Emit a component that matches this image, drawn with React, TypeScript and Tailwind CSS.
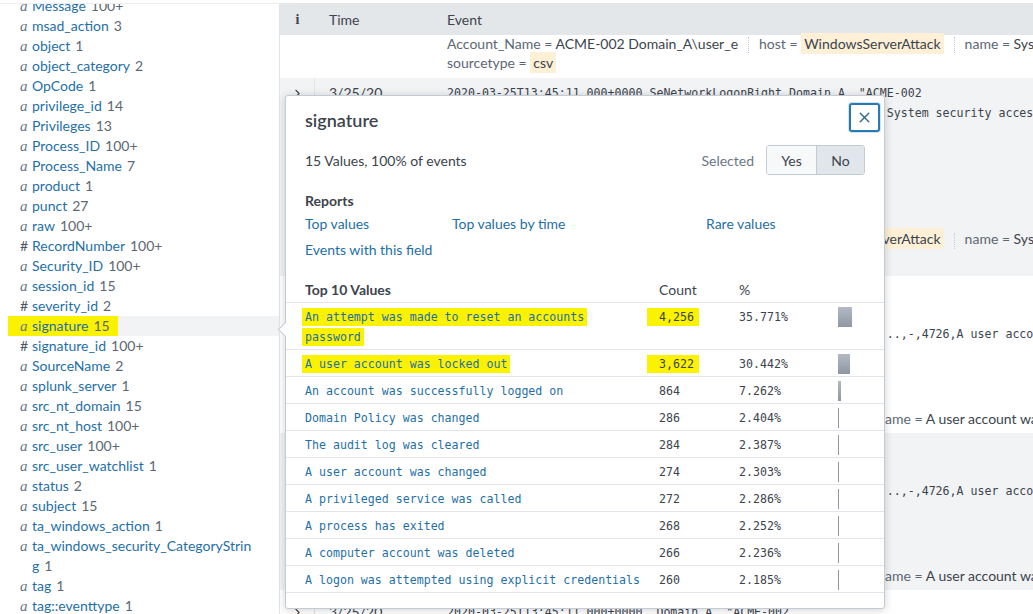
import { X, ChevronRight } from 'lucide-react';

const fields: [string, string, string][] = [
  ['a', 'Message', '100+'],
  ['a', 'msad_action', '3'],
  ['a', 'object', '1'],
  ['a', 'object_category', '2'],
  ['a', 'OpCode', '1'],
  ['a', 'privilege_id', '14'],
  ['a', 'Privileges', '13'],
  ['a', 'Process_ID', '100+'],
  ['a', 'Process_Name', '7'],
  ['a', 'product', '1'],
  ['a', 'punct', '27'],
  ['a', 'raw', '100+'],
  ['#', 'RecordNumber', '100+'],
  ['a', 'Security_ID', '100+'],
  ['a', 'session_id', '15'],
  ['#', 'severity_id', '2'],
  ['a', 'signature', '15'],
  ['#', 'signature_id', '100+'],
  ['a', 'SourceName', '2'],
  ['a', 'splunk_server', '1'],
  ['a', 'src_nt_domain', '15'],
  ['a', 'src_nt_host', '100+'],
  ['a', 'src_user', '100+'],
  ['a', 'src_user_watchlist', '1'],
  ['a', 'status', '2'],
  ['a', 'subject', '15'],
  ['a', 'ta_windows_action', '1'],
  ['a', 'ta_windows_security_CategoryStrin\ng', '1'],
  ['a', 'tag', '1'],
  ['a', 'tag::eventtype', '1'],
];

const topValues = [
  { value: 'An attempt was made to reset an accounts password', count: '4,256', pct: 35.771, hl: true },
  { value: 'A user account was locked out', count: '3,622', pct: 30.442, hl: true },
  { value: 'An account was successfully logged on', count: '864', pct: 7.262 },
  { value: 'Domain Policy was changed', count: '286', pct: 2.404 },
  { value: 'The audit log was cleared', count: '284', pct: 2.387 },
  { value: 'A user account was changed', count: '274', pct: 2.303 },
  { value: 'A privileged service was called', count: '272', pct: 2.286 },
  { value: 'A process has exited', count: '268', pct: 2.252 },
  { value: 'A computer account was deleted', count: '266', pct: 2.236 },
  { value: 'A logon was attempted using explicit credentials', count: '260', pct: 2.185 },
];

const Field = ({ k, v, hl }: { k: string; v: string; hl?: boolean }) => (
  <span className="whitespace-nowrap">
    <span className="text-[#5c6773]">{k} = </span>
    <span className={hl ? 'bg-[#fdf0d7] px-[3px] py-[2px]' : ''}>{v}</span>
  </span>
);

const Sep = () => (
  <span className="mx-[10px] inline-block h-[16px] border-l border-dotted border-[#c3cbd4] align-middle" />
);

const HostLine = () => (
  <div className="whitespace-nowrap">
    <Field k="Account_Name" v="ACME-002 Domain_A\user_e" />
    <Sep />
    <Field k="host" v="WindowsServerAttack" hl />
    <Sep />
    <Field k="name" v="System security access was granted to an account" />
  </div>
);

const NameLine = () => (
  <div className="whitespace-nowrap">
    <Field k="Account_Name" v="ACME-002 Domain_A\user_e" />
    <Sep />
    <Field k="EventID" v="4726" />
    <Sep />
    <Field k="name" v="A user account was deleted" />
  </div>
);

const mono = "font-['DejaVu_Sans_Mono',monospace] text-[11.6px]";
const filler = 'Domain_A\\user_e",ACME-002,WindowsServerAttack,Security,Success,';

const App = () => {
  return (
    <div className="relative flex h-[614px] w-[1033px] overflow-hidden border-t-[3px] border-white bg-white font-['Lato',sans-serif] text-[14px] text-[#3c444d]">
      {/* Fields sidebar */}
      <aside className="w-[280px] shrink-0 overflow-hidden border-r border-t border-[#e1e4e8] border-t-[#eceef0]">
        <ul className="-mt-[8px]">
          {fields.map(([type, name, count]) => {
            const sel = name === 'signature';
            return (
              <li key={name} className={`ml-2 flex leading-5 ${sel ? 'bg-[#f2f3f5]' : ''}`}>
                <span className={`flex pl-3 pr-2 ${sel ? 'bg-[#fbf200]' : ''}`}>
                  <span
                    className={`w-3 shrink-0 ${
                      type === 'a' ? "font-['Liberation_Serif',serif] text-[15px] italic text-[#6b7785]" : 'text-[#4d5763]'
                    }`}
                  >
                    {type}
                  </span>
                  <span className="whitespace-pre-line">
                    <span className="text-[#1f6fa5]">{name}</span>
                    <span className="ml-[5px] text-[#5c6773]">{count}</span>
                  </span>
                </span>
              </li>
            );
          })}
        </ul>
      </aside>

      {/* Events */}
      <main className="min-w-0 flex-1 overflow-hidden">
        <div className="flex h-[32px] items-center bg-[#e4e7ea]">
          <div className="w-[35px] shrink-0 text-center font-['Liberation_Serif',serif] font-bold">i</div>
          <div className="w-[132px] shrink-0 pl-[14px]">Time</div>
          <div>Event</div>
        </div>

        {/* row 1 (scrolled) */}
        <div className="flex pb-[6px]">
          <div className="w-[35px] shrink-0" />
          <div className="w-[132px] shrink-0" />
          <div className="-mt-[1px] leading-[19px]">
            <HostLine />
            <div>
              <Field k="sourcetype" v="csv" hl />
            </div>
          </div>
        </div>

        {/* row 2 */}
        <div className="flex bg-[#f2f3f4]">
          <div className="flex w-[35px] shrink-0 justify-center border-r border-[#e1e4e8] pt-[9px]">
            <ChevronRight size={13} strokeWidth={2} />
          </div>
          <div className="w-[132px] shrink-0 pl-[14px] pt-[5px] leading-5">3/25/20</div>
          <div className="min-w-0 flex-1 pt-[5px] pb-[8px]">
            <div className={`${mono} whitespace-pre leading-5`}>
              <div>2020-03-25T13:45:11.000+0000,SeNetworkLogonRight,Domain_A,,"ACME-002</div>
              <div>{filler}System security access was granted to an account</div>
              <div>Account Name:,ACME-002,Account Domain:,Domain_A</div>
              <div>Access Granted:,SeNetworkLogonRight</div>
              <div>Access Removed:,-</div>
              <div>Show all 19 lines</div>
            </div>
            <div className="mt-[26px] leading-[19px]">
              <HostLine />
              <div>
                <Field k="sourcetype" v="csv" hl />
              </div>
            </div>
          </div>
        </div>

        {/* rows 3 and 4 */}
        {['bg-white', 'bg-[#f2f3f4]'].map((bg) => (
          <div key={bg} className={`flex ${bg}`}>
            <div className="flex w-[35px] shrink-0 justify-center border-r border-[#e1e4e8] pt-[12px]">
              <ChevronRight size={13} strokeWidth={2} />
            </div>
            <div className="w-[132px] shrink-0 pl-[14px] pt-[8px] leading-5">3/25/20</div>
            <div className="min-w-0 flex-1 pt-[8px] pb-[4px]">
              <div className={`${mono} whitespace-pre leading-5`}>
                <div>2020-03-25T13:45:11.000+0000,,Domain_A,,"ACME-002</div>
                <div>Subject:,Security ID:,Domain_A\user_e</div>
                <div>{filler}..,-,4726,A user account was deleted,Audit Success</div>
                <div>Show all 23 lines</div>
              </div>
              <div className="mt-[25px] leading-5">
                <div className="whitespace-nowrap">
                  <Field k="host" v="WindowsServerAttack" hl />
                </div>
                <NameLine />
              </div>
            </div>
          </div>
        ))}

        {/* row 5 */}
        <div className="flex">
          <div className="flex w-[35px] shrink-0 justify-center border-r border-[#e1e4e8] pt-[16px]">
            <ChevronRight size={13} strokeWidth={2} />
          </div>
          <div className="w-[132px] shrink-0 pl-[14px] pt-[12px] leading-5">3/25/20</div>
          <div className={`${mono} whitespace-pre pt-[12px] leading-5`}>
            2020-03-25T13:45:11.000+0000,,Domain_A,,"ACME-002
          </div>
        </div>
      </main>

      {/* Field summary popover */}
      <div className="absolute left-[285px] top-[92px] h-[514px] w-[600px] rounded-[3px] border border-[#c3cbd4] bg-white shadow-[0_1px_8px_rgba(0,0,0,0.18)]">
        <div className="absolute -left-[6px] top-[228px] h-[11px] w-[11px] rotate-45 border-b border-l border-[#c3cbd4] bg-white" />

        <button className="absolute right-[4px] top-[7px] flex h-[29px] w-[31px] items-center justify-center rounded-[3px] border-2 border-[#2a78b4] bg-white text-[#2f6a93] shadow-[0_0_0_1px_#cfe3f3]">
          <X size={17} strokeWidth={2} />
        </button>

        <div className="px-[19px] pt-[12px]">
          <h3 className="text-[18px] font-semibold leading-6 text-[#3c444d]">signature</h3>

          <div className="mt-[13px] flex h-[30px] items-center justify-between">
            <span>15 Values, 100% of events</span>
            <div className="flex items-center">
              <span className="mr-[12px] text-[#6b7785]">Selected</span>
              <div className="flex h-[30px] overflow-hidden rounded-[3px] border border-[#c3cbd4]">
                <span className="flex w-[50px] items-center justify-center border-r border-[#c3cbd4] bg-[#f7f8fa]">Yes</span>
                <span className="flex w-[47px] items-center justify-center bg-[#e1e6eb]">No</span>
              </div>
            </div>
          </div>

          <div className="mt-[16px] font-bold leading-5">Reports</div>
          <div className="mt-[3px] grid grid-cols-[147px_254px_1fr] leading-5 text-[#1f6fa5]">
            <span>Top values</span>
            <span>Top values by time</span>
            <span>Rare values</span>
          </div>
          <div className="mt-[6px] leading-5 text-[#1f6fa5]">Events with this field</div>
        </div>

        {/* Top values table */}
        <div className="mt-[16px]">
          <div className="grid grid-cols-[373px_80px_99px_1fr] border-b border-[#e1e4e8] pb-[3px] pt-[4px] leading-[19px]">
            <span className="pl-[19px] font-bold">Top 10 Values</span>
            <span>Count</span>
            <span>%</span>
            <span />
          </div>
          {topValues.map((row) => (
            <div
              key={row.value}
              className={`${mono} grid grid-cols-[373px_80px_99px_1fr] border-b border-[#e1e4e8] pb-[2px] pt-[4px] leading-5`}
            >
              <span className="pl-[19px] pr-[14px] text-[#1f6fa5]">
                <span className={row.hl ? 'bg-[#fbf200] box-decoration-clone py-[2px] shadow-[3px_0_0_#fbf200,-3px_0_0_#fbf200]' : ''}>
                  {row.value}
                </span>
              </span>
              <span>
                <span className={row.hl ? 'bg-[#fbf200] py-[2px] shadow-[5px_0_0_#fbf200,-12px_0_0_#fbf200]' : ''}>{row.count}</span>
              </span>
              <span>{row.pct.toFixed(3)}%</span>
              <span className="flex h-[20px]">
                <span
                  className={`h-[20px] ${row.pct > 5 ? 'bg-gradient-to-b from-[#b3bac3] to-[#8e97a2]' : 'bg-[#8e97a2]'}`}
                  style={{ width: Math.max(1, Math.round(row.pct * 0.4)) }}
                />
              </span>
            </div>
          ))}
        </div>
      </div>
    </div>
  );
};

export default App;
